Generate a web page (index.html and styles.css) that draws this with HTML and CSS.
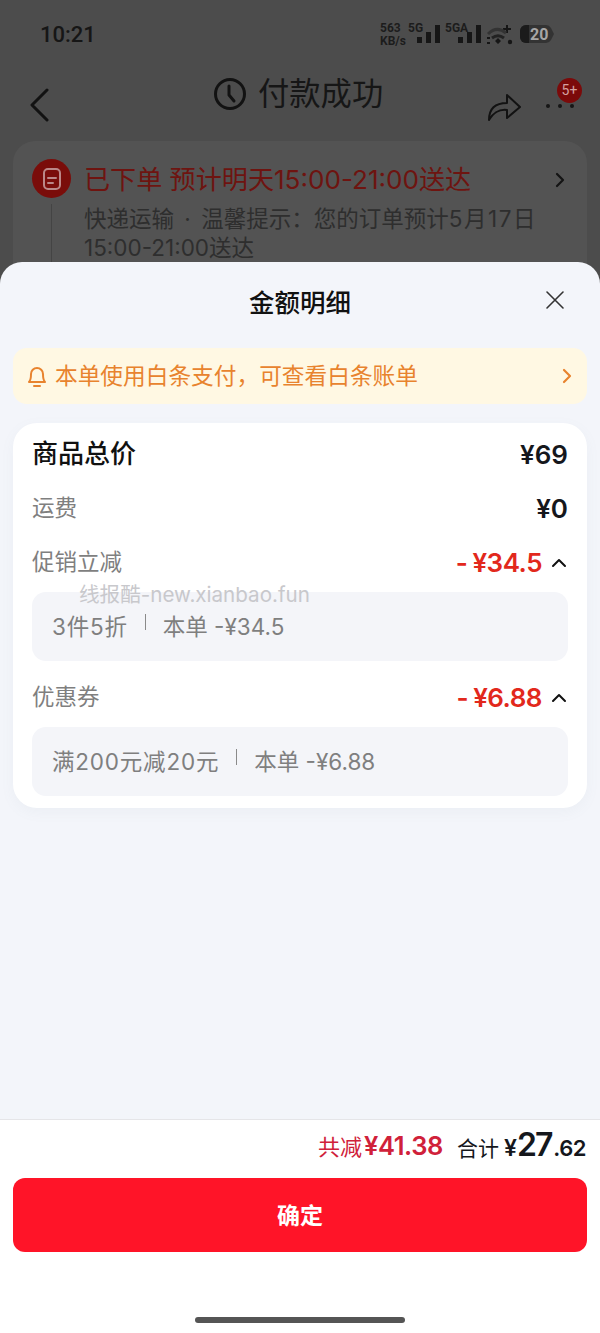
FILE: index.html
```html
<!DOCTYPE html>
<html lang="zh-CN">
<head>
<meta charset="utf-8">
<title>金额明细</title>
<link rel="stylesheet" href="styles.css">
</head>
<body>
<div class="screen">
  <div class="backdrop">
    <div class="status">
      <span class="time">10:21</span>
      <svg class="status-icons" width="176" height="30" viewBox="0 0 176 30">
        <g class="st-text">
          <text x="0" y="12">563</text>
          <text x="0" y="25">KB/s</text>
          <text x="28" y="12">5G</text>
          <text x="65" y="12">5GA</text>
        </g>
        <g class="st-dark">
          <rect x="37" y="17" width="5" height="6"/><rect x="46" y="12" width="5" height="11"/><rect x="55" y="5" width="5" height="18"/>
          <rect x="78" y="17" width="5" height="6"/><rect x="87" y="12" width="5" height="11"/><rect x="96" y="5" width="5" height="18"/>
          <path d="M115 21l3-3 3 3-3 3zM123 8h3V5h2v3h3v2h-3v3h-2v-3h-3z"/>
          <circle cx="130" cy="22" r="2.2"/>
          <rect x="107" y="17" width="3" height="2"/><rect x="107" y="22" width="3" height="2"/>
        </g>
        <path class="st-wifi" d="M108 14c6-6 12-6 18-1"/>
        <path class="st-wifi2" d="M112 18c4-3 8-3 12 0"/>
        <path class="st-batt" d="M146 5h20a6 6 0 0 1 5 3l3 6-3 6a6 6 0 0 1-5 3h-20a6 6 0 0 1-6-6v-6a6 6 0 0 1 6-6z"/>
        <path class="st-cap" d="M146 5h3v18h-3a6 6 0 0 1-6-6v-6a6 6 0 0 1 6-6z"/>
        <text class="st-level" x="150" y="20">20</text>
      </svg>
    </div>
    <div class="nav">
      <svg class="nav-back" width="22" height="34" viewBox="0 0 22 34"><path d="M18 2L3 17l15 15"/></svg>
      <div class="nav-title">
        <svg class="nav-clock" width="34" height="34" viewBox="0 0 34 34"><circle cx="17" cy="17" r="14.5"/><path d="M16 9v9l5 6"/></svg>
        <span>付款成功</span>
      </div>
      <div class="nav-actions">
        <svg class="nav-share" width="36" height="34" viewBox="0 0 36 34"><path d="M3 32c0-11 6-17 18-17V7l13 12-13 11v-8c-8-1-13 2-18 10z"/></svg>
        <div class="nav-more">
          <span class="dot"></span><span class="dot"></span><span class="dot"></span>
          <span class="badge">5+</span>
        </div>
      </div>
    </div>
    <div class="order">
      <div class="order-rail">
        <span class="order-icon">
          <svg width="20" height="24" viewBox="0 0 20 24"><rect x="2" y="2" width="16" height="20" rx="4"/><path d="M6 11h8M6 16h5"/></svg>
        </span>
        <span class="order-line"></span>
      </div>
      <div class="order-main">
        <div class="order-head">
          <span class="order-title">已下单 预计明天15:00-21:00送达</span>
          <svg class="order-arrow" width="12" height="18" viewBox="0 0 12 18"><path d="M3 3l6 6-6 6"/></svg>
        </div>
        <p class="order-text">快递运输 · 温馨提示：您的订单预计<span class="order-date">5月17日</span><br>15:00-21:00送达</p>
      </div>
    </div>
  </div>

  <div class="sheet">
    <div class="sheet-head">
      <h1 class="sheet-title">金额明细</h1>
      <svg class="sheet-close" width="20" height="20" viewBox="0 0 20 20"><path d="M2 2l16 16M18 2L2 18"/></svg>
    </div>
    <div class="notice">
      <svg class="notice-bell" width="20" height="24" viewBox="0 0 20 24"><path d="M2 18c2-2 2-4 2-8a6 6 0 0 1 12 0c0 4 0 6 2 8z"/><path d="M7 22h6"/></svg>
      <span class="notice-text">本单使用白条支付，可查看白条账单</span>
      <svg class="notice-arrow" width="12" height="18" viewBox="0 0 12 18"><path d="M3 3l6 6-6 6"/></svg>
    </div>
    <div class="detail">
      <span class="watermark">线报酷-new.xianbao.fun</span>
      <div class="row row-total">
        <span class="row-name">商品总价</span>
        <span class="amount">¥69</span>
      </div>
      <div class="row row-ship">
        <span class="row-label">运费</span>
        <span class="amount">¥0</span>
      </div>
      <div class="row row-promo">
        <span class="row-label">促销立减</span>
        <span class="amount-wrap">
          <span class="amount amount-red"><span class="minus">-</span>¥34.5</span>
          <svg class="caret" width="16" height="10" viewBox="0 0 16 10"><path d="M2 8l6-6 6 6"/></svg>
        </span>
      </div>
      <div class="sub">
        <span class="sub-rule">3件5折</span><i class="sep"></i><span>本单 -¥34.5</span>
      </div>
      <div class="row row-coupon">
        <span class="row-label">优惠券</span>
        <span class="amount-wrap">
          <span class="amount amount-red"><span class="minus">-</span>¥6.88</span>
          <svg class="caret" width="16" height="10" viewBox="0 0 16 10"><path d="M2 8l6-6 6 6"/></svg>
        </span>
      </div>
      <div class="sub">
        <span class="sub-rule">满200元减20元</span><i class="sep"></i><span>本单 -¥6.88</span>
      </div>
    </div>
    <div class="footer">
      <div class="sum">
        <span class="sum-cut">共减<b>¥41.38</b></span>
        <span class="sum-total">合计<b class="yen">¥</b><b class="big">27</b><b class="dec"><span class="point">.</span>62</b></span>
      </div>
      <button class="confirm" type="button">确定</button>
      <div class="home"></div>
    </div>
  </div>
</div>
</body>
</html>
```
FILE: styles.css
```css
* { box-sizing: border-box; }
html, body { margin: 0; padding: 0; }
body { font-family: Inter, "Noto Sans CJK SC", sans-serif; background: #4c4c4c; }
.screen { width: 600px; height: 1333px; display: flex; flex-direction: column; overflow: hidden; background: #4c4c4c; }

.backdrop { flex: none; height: 282px; margin-bottom: -20px; overflow: hidden; padding: 0 13px; }
.status { height: 64px; display: flex; align-items: flex-start; justify-content: space-between; padding: 20px 0 0 27px; }
.time { font: 500 22px/30px Roboto, sans-serif; color: #161616; }
.status-icons { margin: 0 31px 0 0; overflow: visible; }
.st-text text { font: 700 12px Roboto, sans-serif; fill: #1c1c1c; }
.st-dark rect, .st-dark path, .st-dark circle { fill: #161616; }
.st-wifi, .st-wifi2 { fill: none; stroke: #222; stroke-width: 3; }
.st-wifi { stroke: #333; }
.st-batt { fill: #333; }
.st-cap { fill: #1b1b1b; }
.st-level { font: 700 16px Roboto, sans-serif; fill: #a6a6a6; }

.nav { height: 77px; position: relative; display: flex; align-items: center; justify-content: space-between; padding: 0 0 0 4px; }
.nav-back { margin-top: 4px; margin-left: 12px; }
.nav-back path, .nav-clock circle, .nav-clock path, .nav-share path { fill: none; stroke: #121212; stroke-width: 3; stroke-linecap: round; stroke-linejoin: round; }
.nav-share path { stroke-width: 2; }
.nav-title { position: absolute; left: 200px; top: 5px; display: flex; align-items: center; gap: 11px; font-size: 31.3px; line-height: 50px; color: #161616; font-weight: 400; }
.nav-actions { display: flex; align-items: center; gap: 24px; margin-top: 4px; margin-right: 13px; }
.nav-more { position: relative; display: flex; gap: 8px; padding-top: 2px; }
.dot { width: 4px; height: 4px; border-radius: 50%; background: #161616; }
.badge { position: absolute; left: 11px; top: -24px; width: 25px; height: 25px; border-radius: 50%; background: #7b0a0a; color: #d4a0a0; font: 400 14px/25px Roboto, sans-serif; text-align: center; }

.order { display: flex; gap: 13px; background: #535353; border-radius: 22px 22px 0 0; height: 130px; padding: 18px 22px 0 19px; }
.order-rail { flex: none; width: 39px; display: flex; flex-direction: column; align-items: center; }
.order-icon { width: 39px; height: 39px; border-radius: 50%; background: #7a0d0a; display: flex; align-items: center; justify-content: center; flex: none; }
.order-icon svg { fill: none; stroke: #b88; stroke-width: 2; stroke-linecap: round; }
.order-line { flex: 1; width: 1px; background: #444; margin-top: 6px; }
.order-main { flex: 1; }
.order-head { display: flex; align-items: center; justify-content: space-between; height: 40px; padding-top: 2px; }
.order-title { font-size: 26.1px; line-height: 40px; color: #6e1410; white-space: nowrap; }
.order-arrow { margin-right: -1px; }
.order-arrow path { fill: none; stroke: #141414; stroke-width: 2.2; stroke-linecap: round; stroke-linejoin: round; }
.order-text { margin: 5px 0 0; font-size: 22.5px; line-height: 29px; color: #2e2e2e; white-space: nowrap; word-spacing: 4px; }
.order-date { letter-spacing: 1.6px; }

.sheet { position: relative; flex: 1; min-height: 0; display: flex; flex-direction: column; background: #f3f5fa; border-radius: 22px 22px 0 0; }
.sheet-head { flex: none; height: 86px; display: flex; align-items: center; justify-content: center; position: relative; }
.sheet-title { margin: -4px 0 0; font-size: 25.5px; line-height: 40px; font-weight: 500; color: #111; }
.sheet-close { position: absolute; right: 35px; top: 28px; }
.sheet-close path { fill: none; stroke: #333; stroke-width: 1.6; stroke-linecap: round; }

.notice { flex: none; margin: 0 13px; height: 56px; background: #fff8e3; border-radius: 14px; display: flex; align-items: center; padding: 0 14px; }
.notice-bell { flex: none; }
.notice-bell path { fill: none; stroke: #e8832e; stroke-width: 2; stroke-linecap: round; stroke-linejoin: round; }
.notice-text { flex: 1; margin-left: 8px; font-size: 22.7px; line-height: 32px; color: #e8832e; white-space: nowrap; }
.notice-arrow path { fill: none; stroke: #e8832e; stroke-width: 2.2; stroke-linecap: round; stroke-linejoin: round; }

.detail { position: relative; flex: none; margin: 19px 13px 0; height: 385px; background: #fff; border-radius: 24px; padding: 0 19px; box-shadow: 0 4px 14px rgba(120,130,160,.06); }
.watermark { position: absolute; left: 66px; top: 158px; font-size: 20.6px; line-height: 28px; color: #c8c8cc; white-space: nowrap; z-index: 1; }
.row { display: flex; align-items: center; justify-content: space-between; }
.row-total { height: 32px; margin-top: 16px; }
.row-ship { height: 32px; margin-top: 22px; }
.row-promo { height: 32px; margin-top: 22px; }
.row-coupon { height: 32px; margin-top: 21px; }
.row-name { font-size: 26px; line-height: 32px; font-weight: 500; color: #111; margin-top: -2px; }
.row-label { font-size: 22.5px; line-height: 32px; color: #7f7f7f; margin-top: -2px; }
.amount { font: 600 26px/32px Inter, sans-serif; color: #15171c; }
.amount-wrap { display: flex; align-items: center; gap: 9px; margin-right: 1px; }
.amount-red { color: #e2281c; letter-spacing: -.5px; }
.minus { margin-right: 5px; }
.caret path { fill: none; stroke: #111; stroke-width: 2; stroke-linecap: round; stroke-linejoin: round; }
.sub { height: 69px; margin-top: 13px; background: #f4f5f9; border-radius: 14px; display: flex; align-items: center; padding: 0 20px 3px; font-size: 22.5px; color: #7f7f7f; white-space: nowrap; }
.sub-rule { letter-spacing: .8px; }
.sep { width: 1px; height: 16px; background: #8a8a8a; margin: -6px 17px 0 17px; }

.footer { flex: 1; margin-top: 311px; background: #fff; border-top: 1px solid #e5e5e8; display: flex; flex-direction: column; padding: 0 13px; }
.sum { height: 58px; display: flex; align-items: center; justify-content: flex-end; gap: 14px; padding: 0 1px 5px 0; white-space: nowrap; }
.sum-cut { font-size: 22px; line-height: 32px; color: #d0213a; }
.sum-cut b { font: 600 25.5px/32px Inter, sans-serif; margin-left: 2px; letter-spacing: -.4px; }
.sum-total { font-size: 21px; line-height: 32px; color: #15171c; display: flex; align-items: baseline; }
.yen { font: 600 23px/32px Inter, sans-serif; margin-left: 5px; }
.big { font: 600 32px/32px Inter, sans-serif; letter-spacing: -2px; margin-right: 2px; }
.dec { font: 600 22px/32px Inter, sans-serif; letter-spacing: -.5px; }
.confirm { flex: none; height: 74px; width: 100%; border: 0; border-radius: 12px; background: #ff1428; color: #fff; font: 700 23px/32px "Noto Sans CJK SC", sans-serif; padding: 0 0 3px; }
.home { flex: none; width: 210px; height: 6px; margin: 65px auto 0; border-radius: 3px; background: #555; }
```
